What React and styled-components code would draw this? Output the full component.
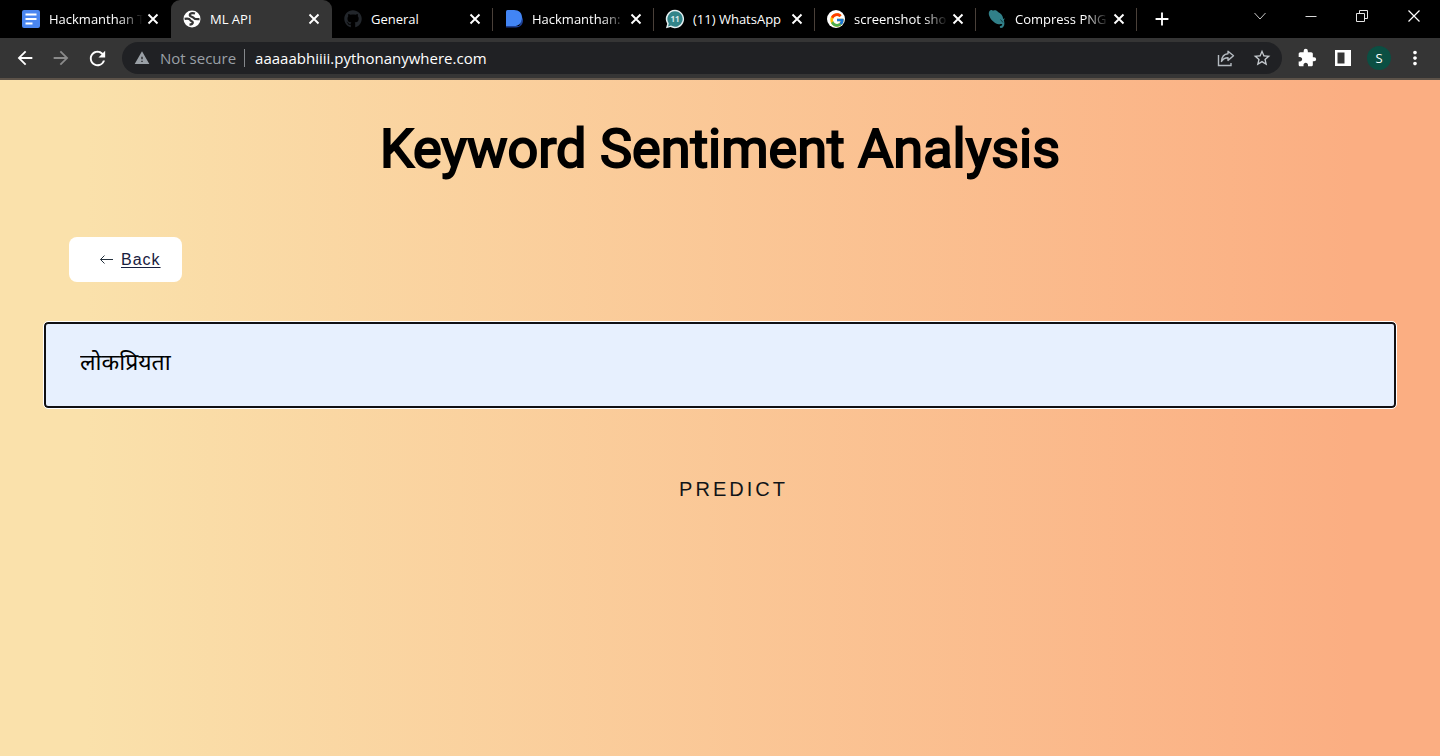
import React, { useState } from 'react'
import styled, { createGlobalStyle } from 'styled-components'
import { FaGithub } from 'react-icons/fa'
import { FcGoogle } from 'react-icons/fc'
import {
  MdAdd,
  MdArrowBack,
  MdArrowForward,
  MdExtension,
  MdMoreVert,
  MdRefresh,
  MdStarBorder,
  MdWarning,
} from 'react-icons/md'

const GlobalStyle = createGlobalStyle`
  * {
    box-sizing: border-box;
  }

  body {
    margin: 0;
    font-family: 'Open Sans', 'Noto Sans', sans-serif;
  }

  button {
    border: 0;
    padding: 0;
    background: none;
    color: inherit;
    font: inherit;
    cursor: pointer;
  }
`

const Window = styled.div`
  display: flex;
  flex-direction: column;
  min-height: 100vh;
`

const TabStrip = styled.header`
  display: flex;
  align-items: stretch;
  height: 38px;
  padding-left: 10px;
  background: #000;
  color: #fff;
`

const Tab = styled.div`
  display: flex;
  align-items: center;
  flex: 0 1 161px;
  min-width: 0;
  padding: 0 10px;
  border-radius: 9px 9px 0 0;
  background: ${props => (props.$active ? '#353535' : 'transparent')};
`

const TabDivider = styled.span`
  align-self: center;
  flex: none;
  width: 1px;
  height: 23px;
  margin-left: -1px;
  background: #4a4039;
`

const Favicon = styled.span`
  display: flex;
  justify-content: center;
  flex: none;
  width: 22px;
  color: ${props => props.$color || '#fff'};
`

const TabTitle = styled.button`
  flex: 1;
  min-width: 0;
  margin: 0 2px 0 7px;
  overflow: hidden;
  white-space: nowrap;
  text-align: left;
  font-size: 13px;
  line-height: 20px;
  mask-image: ${props => (props.$faded ? 'linear-gradient(90deg, #000 calc(100% - 24px), transparent)' : 'none')};
`

const IconButton = styled.button`
  display: flex;
  align-items: center;
  justify-content: center;
  flex: none;
  width: ${props => props.$width || 36}px;
  color: ${props => props.$color || '#fff'};
`

const WindowControls = styled.div`
  display: flex;
  margin-left: auto;
  padding-bottom: 6px;
`

const Toolbar = styled.nav`
  display: flex;
  align-items: center;
  height: 42px;
  padding: 0 7px;
  border-bottom: 2px solid #5d5349;
  background: #353535;
  color: #fff;
`

const AddressBar = styled.div`
  display: flex;
  align-items: center;
  flex: 1;
  height: 32px;
  margin: 0 7px;
  padding: 0 2px 0 12px;
  border-radius: 16px;
  background: #202124;
`

const SecurityLabel = styled.button`
  display: flex;
  align-items: center;
  gap: 10px;
  padding-right: 8px;
  border-right: 1px solid #85888c;
  color: #9aa0a6;
  font-size: 15px;
  line-height: 18px;
`

const AddressInput = styled.input`
  flex: 1;
  min-width: 0;
  padding: 0 10px;
  border: 0;
  outline: 0;
  background: none;
  color: #fff;
  font-family: inherit;
  font-size: 15px;
`

const Avatar = styled.span`
  width: 24px;
  height: 24px;
  border-radius: 50%;
  background: #0b4f43;
  font-size: 13px;
  line-height: 24px;
  text-align: center;
`

const Page = styled.main`
  display: flex;
  flex-direction: column;
  flex: 1;
  padding: 36px 44px;
  background: linear-gradient(90deg, #fae1ab 0%, #fae1ab 6%, #fbae82 94%, #fbae82 100%);
`

const Title = styled.h1`
  margin: 0;
  color: #000;
  font-family: Roboto, sans-serif;
  font-size: 54px;
  font-weight: 400;
  line-height: 66px;
  text-align: center;
  -webkit-text-stroke: 2px #000;
`

const BackButton = styled.a`
  display: flex;
  align-items: center;
  align-self: flex-start;
  gap: 7px;
  height: 45px;
  margin: 55px 0 40px 25px;
  padding: 0 21px 0 30px;
  border-radius: 8px;
  background: #fff;
  color: #182040;
  font-family: 'Liberation Sans', Arial, sans-serif;
  font-size: 16px;
  letter-spacing: 1px;
  text-decoration: none;
`

const BackLabel = styled.span`
  text-decoration: underline;
  text-underline-offset: 2px;
`

const Form = styled.form`
  display: flex;
  flex-direction: column;
`

const KeywordInput = styled.input`
  width: 100%;
  height: 86px;
  padding: 0 34px 8px;
  border: 2px solid #101014;
  border-radius: 4px;
  outline: 1px solid #fff;
  background: #e7f0fe;
  color: #000;
  font-family: 'Noto Sans', 'Noto Sans Devanagari', sans-serif;
  font-size: 23px;
`

const PredictButton = styled.button`
  align-self: center;
  margin: 51px 0 0 27px;
  padding: 18px 24px;
  color: #101418;
  font-family: 'Liberation Sans', Arial, sans-serif;
  font-size: 20px;
  line-height: 24px;
  letter-spacing: 3px;
`

const DocsIcon = () => (
  <svg width="20" height="20" viewBox="0 0 20 20">
    <rect x="1" y="1" width="18" height="18" rx="2" fill="#4a86f0" />
    <path d="M4.500 5.500h11M4.500 10h11M4.500 14.500h7" stroke="#fff" strokeWidth="2" />
  </svg>
)

const GlobeIcon = () => (
  <svg width="20" height="20" viewBox="0 0 20 20">
    <circle cx="10" cy="10" r="8.500" fill="#fff" />
    <path
      d="M13 4.500c-3-1-5.500 0-5.300 1.700.2 1.800 3.200 1.300 4.200 2.900.8 1.400 2.600 1.200 5.600 1M2.600 9.800c2.600-.5 5-.2 5.700 1.300.6 1.300 2.300.9 2.500 2.200.2 1.500-1.400 2.200-3.300 2.300"
      fill="none"
      stroke="#353535"
      strokeWidth="2.200"
    />
  </svg>
)

const DevfolioIcon = () => (
  <svg width="20" height="20" viewBox="0 0 20 20">
    <path d="M4 17l-2-2v3.500h10c4 0 7-3 7-7V8L15 17z" fill="#1d3f94" />
    <path d="M2 2.500a1.500 1.500 0 0 1 1.500-1.500H10c5 0 8 3 8 7.700S15 17 10 17H2z" fill="#4285f4" />
  </svg>
)

const WhatsAppIcon = () => (
  <svg width="20" height="20" viewBox="0 0 20 20">
    <path d="M10 .8a9.200 9.200 0 1 1-4.500 17.300L1 19.300l1.200-4.500A9.200 9.200 0 0 1 10 .8z" fill="#e4eef0" />
    <path d="M10 2.300a7.700 7.700 0 1 1-4 14.300l-3 .8.8-3A7.700 7.700 0 0 1 10 2.300z" fill="#328489" />
    <text x="10" y="13" fill="#d5e6e7" fontSize="8" fontWeight="700" textAnchor="middle">11</text>
  </svg>
)

const GoogleIcon = () => (
  <svg width="20" height="20" viewBox="0 0 20 20">
    <circle cx="10" cy="10" r="9" fill="#fff" />
    <FcGoogle x="3" y="3" width="14" height="14" />
  </svg>
)

const CompressIcon = () => (
  <svg width="20" height="20" viewBox="0 0 20 20">
    <path
      d="M2 3c1-2 3-2.500 4-1.200 2-1 4-.2 5 1.200 3 1.300 5 4 5.200 7l1.600-.7-1 2.300c1 2 1 6-1.600 7.200-1.400.5-2.800-.3-2.400-1.400.4-.9 2-.3 2.400-1.400.2-.8-.6-1.200-1.600-1-2.600.8-5-.1-7-2.200C3.600 10.400 1 6 2 3z"
      fill="#318089"
    />
    <path d="M13.500 10.500l2.500 3" stroke="#133c42" strokeWidth="1" />
  </svg>
)

const TabCloseIcon = () => (
  <svg width="16" height="16" viewBox="0 0 16 16" stroke="#fff" strokeWidth="1.900">
    <path d="M3.500 3.500l9 9M12.500 3.500l-9 9" />
  </svg>
)

const ShareIcon = () => (
  <svg width="20" height="20" viewBox="0 0 20 20" fill="none" stroke="#b4bac0" strokeWidth="1.400">
    <path d="M2.500 7v10.500H15V15" />
    <path d="M12 3.200l5.500 4.600L12 12.400V9.800c-3 0-5 1-6.500 3.700C5.800 9 8 6 12 5.800z" strokeLinejoin="round" />
  </svg>
)

const SidePanelIcon = () => (
  <svg width="18" height="18" viewBox="0 0 18 18">
    <path d="M1 1h16v16H1zM3.500 3.500v11h7v-11z" fill="#fff" fillRule="evenodd" />
  </svg>
)

const ChevronIcon = () => (
  <svg width="14" height="14" viewBox="0 0 14 14" fill="none" stroke="#c8c8c8">
    <path d="M1.500 4L7 10l5.500-6" />
  </svg>
)

const MinimizeIcon = () => (
  <svg width="12" height="12" viewBox="0 0 12 12" stroke="#d8d8d8">
    <path d="M.5 6.500h11" />
  </svg>
)

const RestoreIcon = () => (
  <svg width="14" height="14" viewBox="0 0 14 14" fill="none" stroke="#e4e4e4">
    <path d="M1.500 4.500h8v8h-8zM4.500 4V1.500h8v8H10" />
  </svg>
)

const CrossIcon = () => (
  <svg width="14" height="14" viewBox="0 0 14 14" stroke="#fff" strokeWidth="1.200">
    <path d="M1.500 1.500l11 11M12.500 1.500l-11 11" />
  </svg>
)

const LeftArrowIcon = () => (
  <svg width="15" height="12" viewBox="0 0 15 12" fill="none" stroke="#26323e" strokeWidth="1">
    <path d="M5.500 1.500L1.500 5.500l4 4M1.500 5.500H14" />
  </svg>
)

const tabs = [
  { title: 'Hackmanthan T', icon: <DocsIcon />, faded: true },
  { title: 'ML API', icon: <GlobeIcon />, active: true },
  { title: 'General', icon: <FaGithub size={18} />, color: '#22262b', divider: true },
  { title: 'Hackmanthan:', icon: <DevfolioIcon />, faded: true, divider: true },
  { title: '(11) WhatsApp', icon: <WhatsAppIcon />, divider: true },
  { title: 'screenshot sho', icon: <GoogleIcon />, faded: true, divider: true },
  { title: 'Compress PNG', icon: <CompressIcon />, faded: true, divider: true },
]

const App = () => {
  const [address, setAddress] = useState('aaaaabhiiii.pythonanywhere.com')
  const [keyword, setKeyword] = useState('लोकप्रियता')

  return (
    <Window>
      <GlobalStyle />
      <TabStrip>
        {tabs.map(tab => (
          <React.Fragment key={tab.title}>
            <Tab $active={tab.active}>
              <Favicon $color={tab.color}>{tab.icon}</Favicon>
              <TabTitle $faded={tab.faded}>{tab.title}</TabTitle>
              <IconButton $width={16} aria-label="Close tab"><TabCloseIcon /></IconButton>
            </Tab>
            {tab.divider && <TabDivider />}
          </React.Fragment>
        ))}
        <IconButton $width={50} aria-label="New tab"><MdAdd size={22} /></IconButton>
        <WindowControls>
          <IconButton $width={51} aria-label="Search tabs"><ChevronIcon /></IconButton>
          <IconButton $width={51} aria-label="Minimize"><MinimizeIcon /></IconButton>
          <IconButton $width={52} aria-label="Restore"><RestoreIcon /></IconButton>
          <IconButton $width={52} aria-label="Close"><CrossIcon /></IconButton>
        </WindowControls>
      </TabStrip>
      <Toolbar>
        <IconButton aria-label="Go back"><MdArrowBack size={22} /></IconButton>
        <IconButton $color="#8a8a8a" aria-label="Go forward"><MdArrowForward size={22} /></IconButton>
        <IconButton aria-label="Reload"><MdRefresh size={23} /></IconButton>
        <AddressBar>
          <SecurityLabel><MdWarning size={16} />Not secure</SecurityLabel>
          <AddressInput
            aria-label="Address"
            value={address}
            onChange={event => setAddress(event.target.value)}
          />
          <IconButton aria-label="Share"><ShareIcon /></IconButton>
          <IconButton $color="#c4c9ce" aria-label="Bookmark"><MdStarBorder size={20} /></IconButton>
        </AddressBar>
        <IconButton aria-label="Extensions"><MdExtension size={20} /></IconButton>
        <IconButton aria-label="Side panel"><SidePanelIcon /></IconButton>
        <IconButton aria-label="Profile"><Avatar>S</Avatar></IconButton>
        <IconButton aria-label="Menu"><MdMoreVert size={22} /></IconButton>
      </Toolbar>
      <Page>
        <Title>Keyword Sentiment Analysis</Title>
        <BackButton href="#">
          <LeftArrowIcon />
          <BackLabel>Back</BackLabel>
        </BackButton>
        <Form onSubmit={event => event.preventDefault()}>
          <KeywordInput
            aria-label="Keyword"
            value={keyword}
            onChange={event => setKeyword(event.target.value)}
          />
          <PredictButton type="submit">PREDICT</PredictButton>
        </Form>
      </Page>
    </Window>
  )
}

export default App
